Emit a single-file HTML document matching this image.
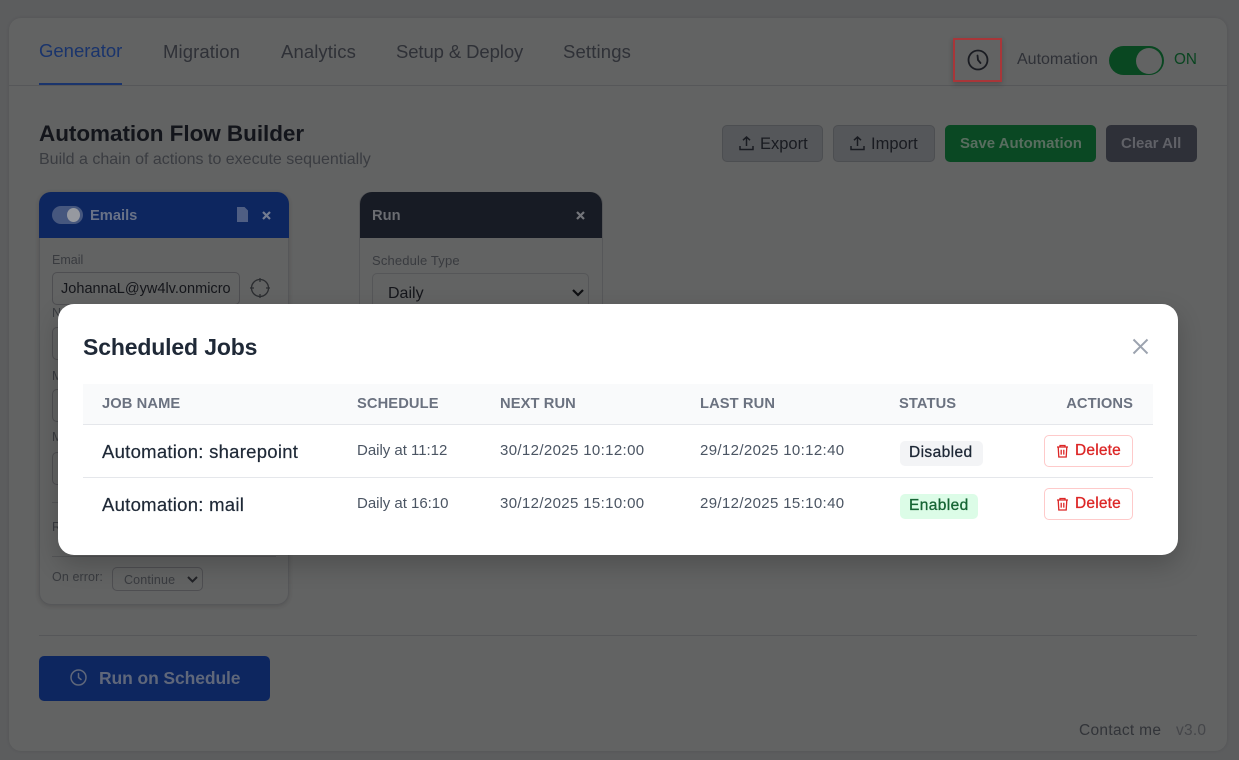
<!DOCTYPE html>
<html><head><meta charset="utf-8"><title>Automation Flow Builder</title>
<style>
html,body{margin:0;padding:0;width:1239px;height:760px;overflow:hidden;background:#7b7c7e;font-family:"Liberation Sans",sans-serif}
.a{position:absolute;box-sizing:border-box}
.t{position:absolute;white-space:nowrap;line-height:20px;height:20px}
svg{position:absolute;overflow:visible}
.b{font-weight:700}
.tab{font-size:18.5px;color:#3f424a}
.th{font-size:14.7px;letter-spacing:.1px;font-weight:700;color:#6b7280;top:394px}
.job{font-size:18.5px;letter-spacing:.27px;color:#1f2937;-webkit-text-stroke:.2px #1f2937}
.date{font-size:15px;letter-spacing:.36px;color:#4b5563}
.sch{font-size:15px;letter-spacing:-.02px;color:#4b5563}
.bad{font-size:15.5px;letter-spacing:.4px}
.del{font-size:15.5px;letter-spacing:.2px;color:#dc2626;-webkit-text-stroke:.3px #dc2626}
</style></head><body>
<div class="a" style="left:9px;top:18px;width:1218px;height:733px;background:#838484;border-radius:12px;box-shadow:0 0 3px rgba(0,0,0,.1)"></div>
<div class="a" style="left:9px;top:85px;width:1218px;height:1px;background:#737477"></div>
<div class="a" style="left:39px;top:83px;width:83px;height:2px;background:#234690"></div>

<div class="t tab" style="left:39px;top:41px;color:#234690">Generator</div>
<div class="t tab" style="left:163px;top:42px;letter-spacing:.1px">Migration</div>
<div class="t tab" style="left:281px;top:42px;letter-spacing:.1px">Analytics</div>
<div class="t tab" style="left:396px;top:42px;letter-spacing:-.1px">Setup &amp; Deploy</div>
<div class="t tab" style="left:563px;top:42px;letter-spacing:.15px">Settings</div>

<div class="a" style="left:953px;top:38px;width:49px;height:44px;border:2.5px solid #e0494d;box-shadow:0 2px 5px rgba(0,0,0,.2)"></div>
<svg style="left:967px;top:49px" width="22" height="22" viewBox="0 0 22 22" fill="none" stroke="#23262e" stroke-width="1.8" stroke-linecap="round"><circle cx="11" cy="11" r="9.5"/><path d="M10.5 6.500 11 11l2.500 3"/></svg>
<div class="t" style="left:1017px;top:50px;font-size:16px;color:#3f424a">Automation</div>
<div class="a" style="left:1109px;top:46px;width:55px;height:29px;border-radius:15px;background:#0d5f2d"></div>
<div class="a" style="left:1136px;top:48px;width:26px;height:26px;border-radius:50%;background:#838484"></div>
<div class="t" style="left:1174px;top:50px;font-size:15.3px;color:#0c5c2b">ON</div>

<div class="t b" style="left:39px;top:124px;font-size:22.5px;letter-spacing:-.05px;color:#1a1d24">Automation Flow Builder</div>
<div class="t" style="left:39px;top:150px;font-size:16px;color:#4e5157">Build a chain of actions to execute sequentially</div>

<div class="a" style="left:722px;top:125px;width:101px;height:37px;background:#727478;border:1px solid #66686c;border-radius:5px"></div>
<svg style="left:739px;top:136px" width="15" height="15" viewBox="0 0 15 15" fill="none" stroke="#22252c" stroke-width="1.5"><path d="M7.5 1v9M4 4.2 7.5 1 11 4.2M1 10v3.500h13V10"/></svg>
<div class="t" style="left:760px;top:134px;font-size:16.500px;color:#22252c">Export</div>
<div class="a" style="left:833px;top:125px;width:102px;height:37px;background:#727478;border:1px solid #66686c;border-radius:5px"></div>
<svg style="left:850px;top:136px" width="15" height="15" viewBox="0 0 15 15" fill="none" stroke="#22252c" stroke-width="1.5"><path d="M7.5 1v9M4 4.2 7.5 1 11 4.2M1 10v3.500h13V10"/></svg>
<div class="t" style="left:871px;top:134px;font-size:16.500px;color:#22252c">Import</div>
<div class="a" style="left:945px;top:125px;width:151px;height:37px;background:#0e602f;border-radius:5px"></div>
<div class="t b" style="left:960px;top:134px;font-size:15px;color:#76927f">Save Automation</div>
<div class="a" style="left:1106px;top:125px;width:91px;height:37px;background:#3e414b;border-radius:5px"></div>
<div class="t b" style="left:1121px;top:134px;font-size:15px;color:#80828a">Clear All</div>

<!-- Emails card -->
<div class="a" style="left:39px;top:192px;width:250px;height:413px;border:1px solid #737477;border-radius:12px;box-shadow:0 1px 4px rgba(0,0,0,.15)"></div>
<div class="a" style="left:39px;top:192px;width:250px;height:46px;background:#12337f;border-radius:12px 12px 0 0"></div>
<div class="a" style="left:52px;top:206px;width:31px;height:18px;border-radius:9px;background:#5e74a8"></div>
<div class="a" style="left:67px;top:208px;width:13px;height:14px;border-radius:50%;background:#c9cdd6"></div>
<div class="t b" style="left:90px;top:206px;font-size:14.700px;color:#8d99b5">Emails</div>
<svg style="left:236px;top:207px" width="13" height="15" viewBox="0 0 13 15"><path d="M1 0h7.500L12 3.500V15H1z" fill="#6a7eaf"/></svg>
<svg style="left:262px;top:211px" width="9" height="9" viewBox="0 0 9 9" stroke="#9aa6c2" stroke-width="2.200"><path d="M1 1l7 7M8 1 1 8"/></svg>
<div class="t" style="left:52px;top:250px;font-size:12.500px;color:#4c4f55">Email</div>
<div class="a" style="left:52px;top:272px;width:188px;height:33px;border:1px solid #68696d;border-radius:5px"></div>
<div class="t" style="left:61px;top:279px;width:172px;overflow:hidden;font-size:14.500px;letter-spacing:.02px;color:#1c1e24">JohannaL@yw4lv.onmicro</div>
<svg style="left:250px;top:278px" width="20" height="20" viewBox="0 0 20 20" fill="none" stroke="#3a3c41" stroke-width="1.300"><circle cx="10" cy="10" r="8.500"/><path d="M10 0v4M10 16v4M0 10h4M16 10h4"/></svg>
<div class="t" style="left:52px;top:303px;font-size:12.500px;color:#4c4f55">N</div>
<div class="a" style="left:52px;top:327px;width:188px;height:33px;border:1px solid #68696d;border-radius:5px"></div>
<div class="t" style="left:52px;top:366px;font-size:12.500px;color:#4c4f55">M</div>
<div class="a" style="left:52px;top:389px;width:188px;height:33px;border:1px solid #68696d;border-radius:5px"></div>
<div class="t" style="left:52px;top:427px;font-size:12.500px;color:#4c4f55">M</div>
<div class="a" style="left:52px;top:452px;width:188px;height:33px;border:1px solid #68696d;border-radius:5px"></div>
<div class="a" style="left:52px;top:502px;width:224px;height:1px;background:#717275"></div>
<div class="t" style="left:52px;top:517px;font-size:12.500px;color:#4c4f55">R</div>
<div class="a" style="left:52px;top:556px;width:224px;height:1px;background:#717275"></div>
<div class="t" style="left:52px;top:567px;font-size:12.500px;letter-spacing:.1px;color:#4c4f55">On error:</div>
<div class="a" style="left:112px;top:567px;width:91px;height:24px;border:1px solid #68696d;border-radius:5px"></div>
<div class="t" style="left:124px;top:570px;font-size:12.500px;letter-spacing:.15px;color:#4c4f55">Continue</div>
<svg style="left:187px;top:576px" width="11" height="7" viewBox="0 0 11 7" fill="none" stroke="#2c2e33" stroke-width="2"><path d="M1 1l4.500 4.500L10 1"/></svg>

<!-- Run card -->
<div class="a" style="left:359px;top:192px;width:244px;height:130px;border:1px solid #737477;border-radius:12px"></div>
<div class="a" style="left:360px;top:192px;width:242px;height:46px;background:#1f2530;border-radius:12px 12px 0 0"></div>
<div class="t b" style="left:372px;top:206px;font-size:14.700px;color:#8f9298">Run</div>
<svg style="left:576px;top:211px" width="9" height="9" viewBox="0 0 9 9" stroke="#9a9da3" stroke-width="2.200"><path d="M1 1l7 7M8 1 1 8"/></svg>
<div class="t" style="left:372px;top:251px;font-size:13px;letter-spacing:.15px;color:#4c4f55">Schedule Type</div>
<div class="a" style="left:372px;top:273px;width:217px;height:40px;border:1px solid #727376;border-radius:5px"></div>
<div class="t" style="left:388px;top:284px;font-size:16px;color:#1c1e24">Daily</div>
<svg style="left:572px;top:289px" width="12" height="8" viewBox="0 0 12 8" fill="none" stroke="#15161a" stroke-width="2.200"><path d="M1 1l5 5 5-5"/></svg>

<div class="a" style="left:39px;top:635px;width:1158px;height:1px;background:#737477"></div>
<div class="a" style="left:39px;top:656px;width:231px;height:45px;background:#12337f;border-radius:5px"></div>
<svg style="left:70px;top:669px" width="17" height="17" viewBox="0 0 17 17" fill="none" stroke="#7f8aa3" stroke-width="1.500" stroke-linecap="round"><circle cx="8.500" cy="8.500" r="7.500"/><path d="M8.500 4.500v4l2.500 2"/></svg>
<div class="t b" style="left:99px;top:668px;font-size:17.500px;letter-spacing:-.1px;color:#7f8aa3">Run on Schedule</div>
<div class="t" style="left:1079px;top:721px;font-size:15.500px;letter-spacing:.3px;color:#43464c">Contact me</div>
<div class="t" style="left:1176px;top:721px;font-size:15.500px;letter-spacing:.25px;color:#5c5e63">v3.0</div>

<!-- dim layer -->
<div class="a" style="left:0;top:0;width:1239px;height:760px;background:rgba(0,0,0,.25)"></div>

<!-- Modal -->
<div class="a" style="left:58px;top:304px;width:1120px;height:251px;background:#fff;border-radius:16px;box-shadow:0 10px 25px rgba(0,0,0,.2)"></div>
<div class="t b" style="left:83px;top:337px;font-size:23px;letter-spacing:-.15px;color:#1f2937">Scheduled Jobs</div>
<svg style="left:1133px;top:339px" width="15" height="15" viewBox="0 0 15 15" stroke="#9ca3af" stroke-width="2"><path d="M.5.5l14 14M14.500.5l-14 14"/></svg>
<div class="a" style="left:83px;top:384px;width:1070px;height:40px;background:#f9fafb"></div>
<div class="a" style="left:83px;top:424px;width:1070px;height:1px;background:#e5e7eb"></div>
<div class="a" style="left:83px;top:477px;width:1070px;height:1px;background:#e5e7eb"></div>

<div class="t th" style="left:102px">JOB NAME</div>
<div class="t th" style="left:357px">SCHEDULE</div>
<div class="t th" style="left:500px">NEXT RUN</div>
<div class="t th" style="left:700px">LAST RUN</div>
<div class="t th" style="left:899px">STATUS</div>
<div class="t th" style="right:106px">ACTIONS</div>

<div class="t job" style="left:102px;top:442px">Automation: sharepoint</div>
<div class="t sch" style="left:357px;top:441px">Daily at 11:12</div>
<div class="t date" style="left:500px;top:441px">30/12/2025 10:12:00</div>
<div class="t date" style="left:700px;top:441px">29/12/2025 10:12:40</div>
<div class="a" style="left:900px;top:441px;width:83px;height:25px;background:#f3f4f6;border-radius:5px"></div>
<div class="t bad" style="left:909px;top:443px;color:#1f2937;-webkit-text-stroke:.3px #1f2937">Disabled</div>
<div class="a" style="left:1044px;top:435px;width:89px;height:32px;background:#fff;border:1px solid #fecaca;border-radius:5px"></div>
<svg style="left:1056px;top:444px" width="13" height="14" viewBox="0 0 13 14" fill="none" stroke="#dc2626" stroke-width="1.300"><path d="M1 3h11M4 3V1.500h5V3M2.200 3l.6 10h7.400l.6-10M5.200 5.800v4.800M7.800 5.800v4.800"/></svg>
<div class="t del" style="left:1075px;top:441px">Delete</div>

<div class="t job" style="left:102px;top:495px">Automation: mail</div>
<div class="t sch" style="left:357px;top:494px">Daily at 16:10</div>
<div class="t date" style="left:500px;top:494px">30/12/2025 15:10:00</div>
<div class="t date" style="left:700px;top:494px">29/12/2025 15:10:40</div>
<div class="a" style="left:900px;top:494px;width:78px;height:25px;background:#dcfce7;border-radius:5px"></div>
<div class="t bad" style="left:909px;top:496px;color:#166534;-webkit-text-stroke:.3px #166534">Enabled</div>
<div class="a" style="left:1044px;top:488px;width:89px;height:32px;background:#fff;border:1px solid #fecaca;border-radius:5px"></div>
<svg style="left:1056px;top:497px" width="13" height="14" viewBox="0 0 13 14" fill="none" stroke="#dc2626" stroke-width="1.300"><path d="M1 3h11M4 3V1.500h5V3M2.200 3l.6 10h7.400l.6-10M5.200 5.800v4.800M7.800 5.800v4.800"/></svg>
<div class="t del" style="left:1075px;top:494px">Delete</div>
</body></html>
